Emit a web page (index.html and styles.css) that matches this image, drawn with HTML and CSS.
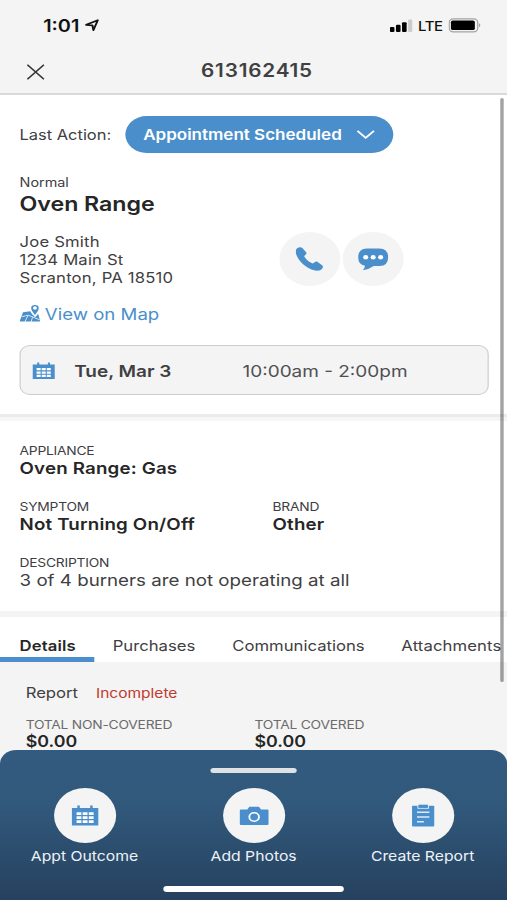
FILE: index.html
```
<!DOCTYPE html>
<html lang="en">
<head>
<meta charset="utf-8">
<title>613162415</title>
<link rel="stylesheet" href="styles.css">
</head>

<body>
<div class="screen">

  <div class="status">
    <span class="time">1:01</span>
    <svg class="locate" width="12" height="13" viewBox="0 0 12 13"><path d="M0.9 5.8 L11 1.2 L7.2 11.2 L6.4 6.3 Z" fill="none" stroke="#111" stroke-width="1.7" stroke-linejoin="round"/></svg>
    <svg class="bars" width="20" height="13" viewBox="0 0 20 13">
      <rect x="0" y="8" width="4" height="5" rx="1" fill="#000"/>
      <rect x="5.3" y="5.7" width="4" height="7.3" rx="1" fill="#000"/>
      <rect x="10.6" y="3.2" width="4" height="9.8" rx="1" fill="#000"/>
      <rect x="15.9" y="0.4" width="3.6" height="12.6" rx="1" fill="#ccc"/>
    </svg>
    <span class="lte">LTE</span>
    <svg class="battery" width="29" height="15" viewBox="0 0 29 15">
      <rect x="0.6" y="0.9" width="24.8" height="13" rx="3.6" fill="none" stroke="#a3a3a3" stroke-width="1.1"/>
      <rect x="2.1" y="2.6" width="20.8" height="9.4" rx="1.6" fill="#000"/>
      <path d="M26.7 5.3 Q28.6 7.3 26.7 9.3 Z" fill="#888"/>
    </svg>
  </div>

  <header>
    <svg class="close" width="16" height="16" viewBox="0 0 16 16"><path d="M0.8 0.8 L15.2 15.2 M15.2 0.8 L0.8 15.2" stroke="#333" stroke-width="1.4" fill="none"/></svg>
    <h1>613162415</h1>
  </header>

  <section class="job">
    <div class="action">
      <span class="action-label">Last Action:</span>
      <button class="pill">Appointment Scheduled
        <svg width="16" height="9" viewBox="0 0 16 9"><path d="M0.8 0.8 L8 7.8 L15.2 0.8" fill="none" stroke="#fff" stroke-width="1.7"/></svg>
      </button>
    </div>

    <div class="priority">Normal</div>
    <h2>Oven Range</h2>

    <div class="contact">
      <div class="address">Joe Smith<br>1234 Main St<br>Scranton, PA 18510</div>
      <div class="contact-buttons">
        <div class="round">
          <svg width="24" height="24" viewBox="0 0 24 24"><path d="M1.2 1.5 C2.6 0.2 4.8 -0.2 5.9 1.1 L9.2 5.3 C9.8 6.2 9.6 6.8 8.9 7.5 L7.5 8.9 C8.6 12 12 15.3 15.2 16.5 L16.8 15 C17.5 14.4 18.1 14.3 18.9 14.8 L23.1 18.2 C24.4 19.4 23.7 21.3 22.4 22.6 C21 24 18 24 16 23.3 C8.8 20.8 3 14.8 0.7 7.8 C0 5.6 -0.1 2.7 1.2 1.5 Z" fill="#4a8fcb"/></svg>
        </div>
        <div class="round">
          <svg width="27" height="23" viewBox="0 0 27 23"><path d="M8 0.5 H19 Q26.5 0.5 26.5 9.3 Q26.5 18 19 18 H14 Q9.5 21.6 4.5 22.3 Q6.4 20.3 6.3 17.8 Q0.5 16.8 0.5 9.3 Q0.5 0.5 8 0.5 Z" fill="#4a8fcb"/><g fill="#fff"><circle cx="7" cy="9.2" r="2.2"/><circle cx="13.5" cy="9.2" r="2.2"/><circle cx="20" cy="9.2" r="2.2"/></g></svg>
        </div>
      </div>
    </div>

    <a class="map">
      <svg width="18" height="18" viewBox="0 0 18 18">
        <path d="M3 8.3 L9.3 7.2 Q10.7 10.6 13.5 13.2 Q15.3 11.6 16.2 9.8 L18 17.6 L0 17.6 Z" fill="#4a8fcb"/>
        <path d="M13.4 0.9 Q16.7 0.9 16.7 4 Q16.7 6.6 13.4 10.9 Q10.1 6.6 10.1 4 Q10.1 0.9 13.4 0.9 Z" fill="#4a8fcb"/>
        <circle cx="13.4" cy="4" r="1.7" fill="#fff"/>
        <path d="M2 12.7 L7.5 11.2 L17.5 15.8 M7.5 11.2 L4.5 18 M11.3 13.2 L10 18" stroke="#fff" stroke-width="0.7" fill="none"/>
      </svg>View on Map</a>

    <div class="slot">
      <svg class="cal" width="24" height="21" viewBox="0 0 24 21"><use href="#calendar"/></svg>
      <span class="day">Tue, Mar 3</span>
      <span class="hours">10:00am - 2:00pm</span>
    </div>
  </section>

  <section class="details">
    <div class="field">
      <div class="label">APPLIANCE</div>
      <div class="value">Oven Range: Gas</div>
    </div>
    <div class="fields">
      <div class="field">
        <div class="label">SYMPTOM</div>
        <div class="value">Not Turning On/Off</div>
      </div>
      <div class="field">
        <div class="label">BRAND</div>
        <div class="value">Other</div>
      </div>
    </div>
    <div class="field">
      <div class="label">DESCRIPTION</div>
      <div class="value plain">3 of 4 burners are not operating at all</div>
    </div>
  </section>

  <nav>
    <a class="tab active">Details</a>
    <a class="tab purchases">Purchases</a>
    <a class="tab communications">Communications</a>
    <a class="tab attachments">Attachments</a>
  </nav>

  <section class="report">
    <div class="report-title">Report <span class="incomplete">Incomplete</span></div>
    <div class="totals">
      <div>
        <div class="label">TOTAL NON-COVERED</div>
        <div class="value">$0.00</div>
      </div>
      <div>
        <div class="label">TOTAL COVERED</div>
        <div class="value">$0.00</div>
      </div>
    </div>
  </section>

  <div class="scrollbar"></div>

  <footer>
    <div class="handle"></div>
    <div class="sheet-actions">
      <div class="sheet-action">
        <div class="disc"><svg width="24" height="21" viewBox="0 0 24 21">
          <g id="calendar">
            <path d="M0.5 3 H5.2 V0.5 H7.4 V3 H16.4 V0.5 H18.6 V3 H23.5 V20.5 H0.5 Z" fill="#4a8fcb"/>
            <path d="M4.6 7.3 H8.8 V10 H4.6 Z M9.9 7.3 H14.1 V10 H9.9 Z M15.2 7.3 H19.4 V10 H15.2 Z M4.6 11.3 H8.8 V14 H4.6 Z M9.9 11.3 H14.1 V14 H9.9 Z M15.2 11.3 H19.4 V14 H15.2 Z M4.6 15.3 H8.8 V18 H4.6 Z M9.9 15.3 H14.1 V18 H9.9 Z M15.2 15.3 H19.4 V18 H15.2 Z" fill="#fff"/>
          </g>
        </svg></div>
        Appt Outcome
      </div>
      <div class="sheet-action">
        <div class="disc"><svg width="26" height="20" viewBox="0 0 26 20">
          <path d="M1.5 3.4 H7 L8.8 0.8 H17.2 L19 3.4 H24.5 Q25.5 3.4 25.5 4.4 V18 Q25.5 19 24.5 19 H1.5 Q0.5 19 0.5 18 V4.4 Q0.5 3.4 1.5 3.4 Z" fill="#4a8fcb"/>
          <circle cx="13" cy="11" r="4.2" fill="none" stroke="#fff" stroke-width="1.6"/>
        </svg></div>
        Add Photos
      </div>
      <div class="sheet-action">
        <div class="disc"><svg width="20" height="23" viewBox="0 0 20 23">
          <rect x="0.3" y="1.8" width="19.4" height="20.7" rx="0.8" fill="#4a8fcb"/>
          <path d="M5.4 1.3 V4.3 H14.6 V1.3" fill="none" stroke="#dcebf7" stroke-width="0.9"/>
          <rect x="6" y="0.7" width="8" height="3" fill="#4a8fcb"/>
          <path d="M4.6 8.3 H15.4 M4.6 13 H15.4 M4.6 17.8 H10.6" stroke="#dcebf7" stroke-width="1.5"/>
        </svg></div>
        Create Report
      </div>
    </div>
    <div class="home"></div>
  </footer>

</div>
</body>
</html>
```
FILE: styles.css
```
body, html {
  margin: 0;
  padding: 0;
  overflow: hidden;
}

.screen {
  position: relative;
  width: 441px;
  height: 900px;
  overflow: hidden;
  transform: scaleX(1.15);
  transform-origin: 0 0;
  background: #fff;
  color: #404042;
  font-family: Inter, "Liberation Sans", sans-serif;
  font-size: 14.5px;
}

h1, h2 {
  margin: 0;
  font-weight: 600;
}

svg {
  display: block;
  flex: none;
}

.status {
  display: flex;
  align-items: center;
  box-sizing: border-box;
  height: 50px;
  padding: 1px 22px 0 37.5px;
  background: #f4f4f4;
  color: #111;
}

.time {
  font-size: 17.3px;
  font-weight: 600;
}

.locate {
  margin-left: 5px;
}

.bars {
  margin-left: auto;
}

.lte {
  margin: 0 5px 0 4.5px;
  font-size: 13px;
  font-weight: 500;
  letter-spacing: -.3px;
}

header {
  display: flex;
  align-items: center;
  box-sizing: border-box;
  height: 45px;
  padding: 0 23px 2px;
  background: #f4f4f4;
  border-bottom: 2px solid #d9d9d9;
}

.close {
  margin-top: 3px;
}

h1 {
  flex: 1;
  margin-right: 10px;
  font-size: 18px;
  letter-spacing: .7px;
  text-align: center;
}

.job {
  box-sizing: border-box;
  height: 322px;
  padding: 21px 16px 0 17px;
  border-bottom: 3px solid #ebebeb;
}

.action {
  display: flex;
  align-items: center;
}

.action-label {
  width: 91.5px;
  font-size: 14.3px;
}

.pill {
  display: flex;
  align-items: center;
  justify-content: space-between;
  width: 233px;
  height: 37px;
  padding: 0 16px;
  border: 0;
  border-radius: 19px;
  background: #4a8fcb;
  color: #fff;
  font-family: inherit;
  font-size: 14.8px;
  font-weight: 600;
}

.priority {
  margin-top: 22px;
  font-size: 12.5px;
  line-height: 16px;
}

h2 {
  color: #262626;
  font-size: 20.2px;
  letter-spacing: -.05px;
  line-height: 25px;
}

.contact {
  display: flex;
  justify-content: space-between;
  margin-top: 16px;
}

.address {
  padding-top: 1px;
  letter-spacing: .15px;
  line-height: 18.2px;
}

.contact-buttons {
  display: flex;
  gap: 2.5px;
  margin-right: 74px;
}

.round, .disc {
  display: flex;
  align-items: center;
  justify-content: center;
  width: 53px;
  height: 54px;
  border-radius: 50%;
  background: #f4f4f4;
}

.map {
  display: flex;
  gap: 4px;
  margin-top: 16px;
  color: #4a8fcb;
  font-size: 16.2px;
  line-height: 20px;
}

.slot {
  display: flex;
  align-items: center;
  box-sizing: border-box;
  height: 50px;
  margin-top: 21.4px;
  margin-left: -.5px;
  padding: 1px 0 0 10px;
  border: 1.5px solid #ccc;
  border-radius: 9px;
  background: #f4f4f4;
  font-size: 16.5px;
}

.cal {
  width: 20px;
  height: 17.5px;
}

.day {
  width: 146.4px;
  margin-left: 17px;
  font-weight: 600;
}

.hours {
  color: #505052;
}

.details {
  box-sizing: border-box;
  height: 200px;
  padding: 21.5px 17px 0;
  border-top: 4px solid #f6f6f6;
  border-bottom: 6px solid #f4f4f4;
}

.field {
  height: 34px;
  margin-bottom: 22.3px;
}

.fields {
  display: grid;
  grid-template-columns: 220px 1fr;
}

.label {
  font-size: 12px;
  letter-spacing: -.2px;
  line-height: 15px;
}

.value {
  padding-top: 1px;
  color: #262626;
  font-size: 16.3px;
  font-weight: 600;
  letter-spacing: .15px;
  line-height: 19px;
}

.plain {
  color: #404042;
  font-weight: 400;
  letter-spacing: 0;
}

nav {
  display: flex;
  height: 45px;
  line-height: 57px;
  white-space: nowrap;
}

.tab {
  box-sizing: border-box;
  height: 45px;
}

.active {
  width: 82px;
  padding-left: 17px;
  border-bottom: 5px solid #4a8fcb;
  color: #262626;
  font-weight: 600;
  letter-spacing: .1px;
}

.purchases {
  width: 104px;
  margin-left: 16px;
}

.communications {
  width: 147px;
}

.attachments {
  letter-spacing: .1px;
}

.report {
  height: 240px;
  padding: 22px 22.3px 0;
  background: #f4f4f4;
}

.report-title {
  line-height: 18px;
}

.incomplete {
  margin-left: 11.5px;
  color: #c1392f;
  font-size: 13.5px;
}

.totals {
  display: grid;
  grid-template-columns: 199px 1fr;
  margin-top: 15px;
}

.totals .label {
  color: #6c6c6c;
}

.totals .value {
  padding: 0;
  font-size: 15.5px;
  letter-spacing: 0;
}

.scrollbar {
  position: absolute;
  top: 98px;
  right: 3px;
  width: 3.5px;
  height: 584px;
  border-radius: 2px;
  background: rgba(0, 0, 0, .36);
}

footer {
  position: absolute;
  left: 0;
  right: 0;
  bottom: 0;
  box-sizing: border-box;
  height: 150px;
  padding-top: 17.5px;
  border-radius: 14px 14px 0 0;
  background: linear-gradient(#335b7f 0%, #31597c 35%, #26415f 100%);
  color: #eef3f8;
}

.handle, .home {
  width: 75px;
  height: 5.5px;
  margin: 0 auto;
  border-radius: 3px;
  background: #dfe2e5;
}

.sheet-actions {
  display: flex;
  justify-content: space-between;
  margin-top: 15px;
}

.sheet-action {
  display: flex;
  flex-direction: column;
  align-items: center;
  width: 147px;
  font-size: 13.7px;
  line-height: 26px;
}

.disc {
  width: 54px;
  height: 55px;
}

.home {
  width: 157px;
  margin-top: 17px;
  background: #fff;
}
```
